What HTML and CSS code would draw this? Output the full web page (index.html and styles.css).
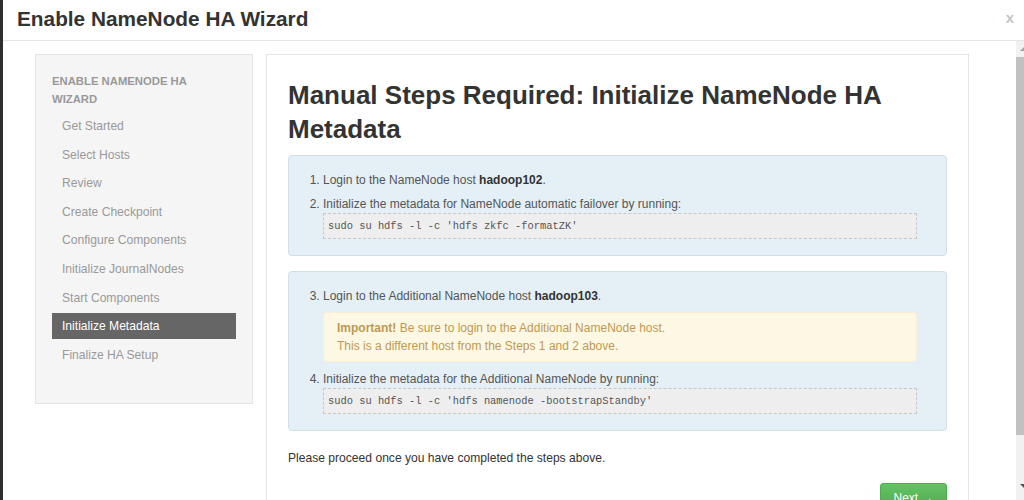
FILE: index.html
```html
<!DOCTYPE html>
<html>
<head>
<meta charset="utf-8">
<link rel="stylesheet" href="styles.css">
</head>
<body>
<div class="modal">
  <div class="modal-header">
    <h3 class="modal-title">Enable NameNode HA Wizard</h3>
    <span class="close">x</span>
  </div>
  <div class="modal-body">
    <div class="main">
      <div class="sidebar">
        <div class="nav-header">Enable NameNode HA Wizard</div>
        <ul class="nav-list">
          <li>Get Started</li>
          <li>Select Hosts</li>
          <li>Review</li>
          <li>Create Checkpoint</li>
          <li>Configure Components</li>
          <li>Initialize JournalNodes</li>
          <li>Start Components</li>
          <li class="active">Initialize Metadata</li>
          <li>Finalize HA Setup</li>
        </ul>
      </div>
      <div class="content">
        <h2 class="page-title">Manual Steps Required: Initialize NameNode HA Metadata</h2>
        <div class="info-box">
          <ol class="steps" start="1">
            <li>Login to the NameNode host <b>hadoop102</b>.</li>
            <li>Initialize the metadata for NameNode automatic failover by running:
              <div class="code">sudo su hdfs -l -c 'hdfs zkfc -formatZK'</div>
            </li>
          </ol>
        </div>
        <div class="info-box">
          <ol class="steps" start="3">
            <li>Login to the Additional NameNode host <b>hadoop103</b>.
              <div class="warning"><b>Important!</b> Be sure to login to the Additional NameNode host.<br>This is a different host from the Steps 1 and 2 above.</div>
            </li>
            <li class="step4">Initialize the metadata for the Additional NameNode by running:
              <div class="code">sudo su hdfs -l -c 'hdfs namenode -bootstrapStandby'</div>
            </li>
          </ol>
        </div>
        <p class="proceed">Please proceed once you have completed the steps above.</p>
        <div class="actions"><button class="btn-next">Next &rarr;</button></div>
      </div>
    </div>
    <div class="scrollbar">
      <div class="arrow-up"></div>
      <div class="thumb"></div>
      <div class="arrow-down"></div>
    </div>
  </div>
</div>
</body>
</html>
```
FILE: styles.css
```css
* { box-sizing: border-box; }
html, body { margin: 0; padding: 0; height: 500px; overflow: hidden; }
body {
  background: #2d2d2d;
  font-family: "Liberation Sans", Arial, sans-serif;
  font-size: 12px;
  color: #333;
}
.modal {
  margin-left: 3px;
  height: 500px;
  background: #fff;
  display: flex;
  flex-direction: column;
}
.modal-header {
  height: 41px;
  border-bottom: 1px solid #e5e5e5;
  display: flex;
  align-items: center;
  justify-content: space-between;
  padding: 0 10px 3px 14px;
}
.modal-title {
  margin: 0;
  font-size: 20.8px;
  font-weight: bold;
  color: #333;
}
.close {
  color: #c4c4c4;
  font-size: 15px;
  font-weight: bold;
  margin-top: -3px;
}
.modal-body {
  flex: 1;
  display: flex;
  min-height: 0;
}
.main {
  flex: 1;
  display: flex;
  align-items: flex-start;
  padding: 13px 0 0 32px;
  gap: 13px;
}
.sidebar {
  width: 218px;
  height: 350px;
  background: #f5f5f5;
  border: 1px solid #e3e3e3;
  padding: 17px 16px 0 16px;
}
.nav-header {
  font-size: 11.3px;
  font-weight: bold;
  line-height: 18px;
  color: #999;
  text-transform: uppercase;
  padding-right: 30px;
}
.nav-list {
  list-style: none;
  margin: 5px 0 0 0;
  padding: 0;
}
.nav-list li {
  padding: 3px 10px;
  line-height: 20px;
  margin-bottom: 2.6px;
  color: #999;
  font-size: 12.1px;
}
.nav-list li.active {
  background: #666;
  color: #fff;
}
.content {
  width: 703px;
  height: 460px;
  border: 1px solid #e3e3e3;
  padding: 23px 21px 0 21px;
}
.page-title {
  margin: 0 0 9px 0;
  font-size: 26px;
  line-height: 34px;
  font-weight: bold;
  color: #333;
}
.info-box {
  background: #e4eff6;
  border: 1px solid #d2dfe8;
  border-radius: 4px;
  padding: 15px 29px 16px 20px;
  margin-bottom: 15px;
}
.steps {
  margin: 0;
  padding-left: 14px;
  color: #555;
}
.steps li {
  line-height: 18px;
}
.steps li b { color: #333; }
.steps li + li { margin-top: 6px; }
.steps li.step4 { margin-top: 8px; }
.code {
  background: #eee;
  border: 1px dashed #c8c8c8;
  font-family: "Liberation Mono", "Courier New", monospace;
  font-size: 10.4px;
  line-height: 24px;
  height: 26px;
  padding: 0 4px;
  color: #555;
}
.warning {
  margin-top: 7px;
  background: #fcf8e3;
  border: 1px solid #fbeed5;
  border-radius: 4px;
  color: #c09853;
  padding: 6px 13px;
  line-height: 18px;
}
.steps .warning b { color: #c09853; }
.proceed {
  margin: 18px 0 0 0;
  line-height: 18px;
  font-size: 12.1px;
  color: #333;
}
.actions {
  display: flex;
  justify-content: flex-end;
  margin-top: 16px;
}
.btn-next {
  width: 67px;
  height: 30px;
  border: 1px solid #4cae4c;
  border-radius: 3px;
  background: linear-gradient(#62c462, #51a351);
  color: #fff;
  font-family: "Liberation Sans", Arial, sans-serif;
  font-size: 12px;
  padding: 0;
  line-height: 24px;
  text-align: center;
}
.scrollbar {
  width: 8px;
  margin-left: 47px;
  background: #f1f1f1;
  display: flex;
  flex-direction: column;
  align-items: center;
  padding: 6px 0 12px 0;
}
.arrow-up {
  width: 0; height: 0;
  border-left: 4px solid transparent;
  border-right: 4px solid transparent;
  border-bottom: 4px solid #a3a3a3;
  margin-left: 8px;
}
.thumb {
  width: 8px;
  height: 378px;
  margin-top: 6px;
  background: #c1c1c1;
}
.arrow-down {
  margin-top: auto;
  width: 0; height: 0;
  border-left: 4px solid transparent;
  border-right: 4px solid transparent;
  border-top: 4px solid #505050;
  margin-left: 8px;
}
```
